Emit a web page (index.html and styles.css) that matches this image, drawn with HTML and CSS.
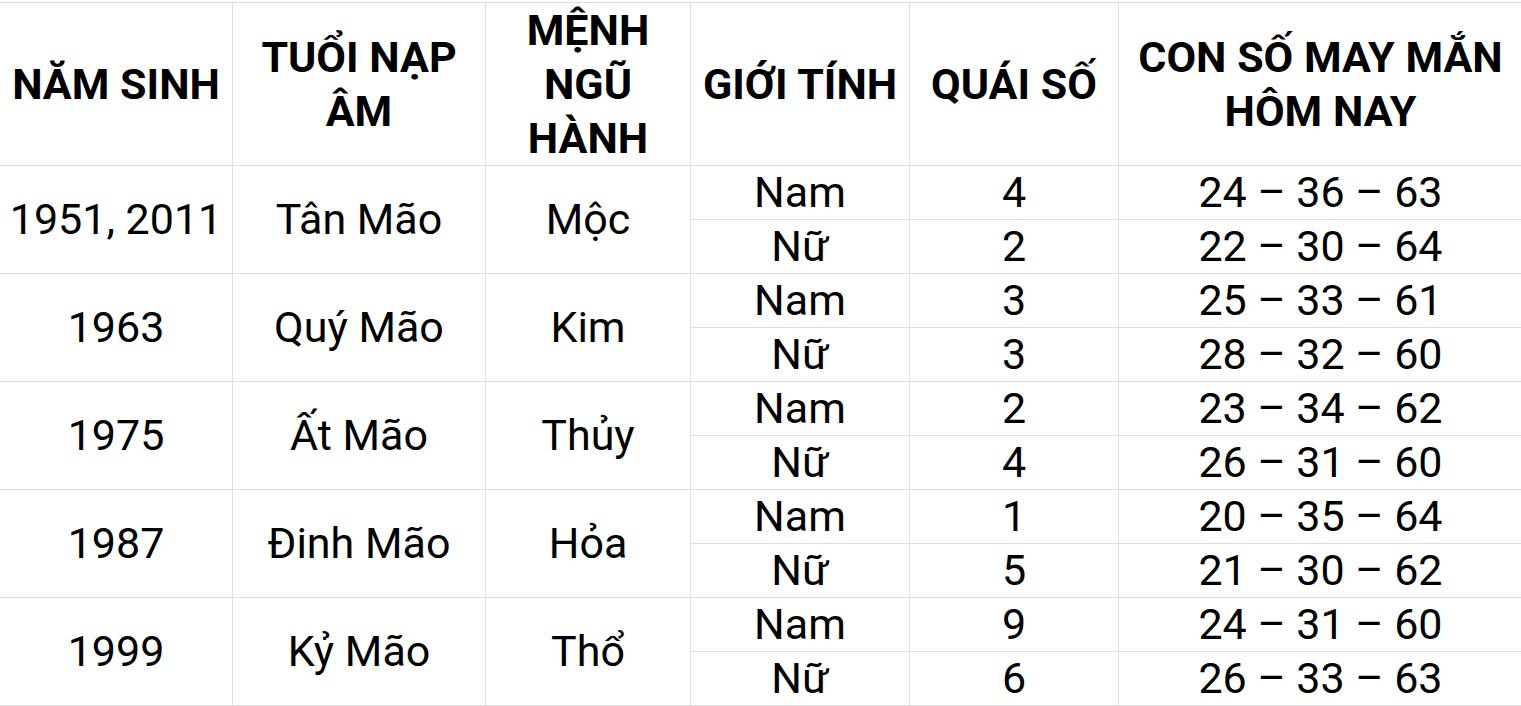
FILE: index.html
```html
<!DOCTYPE html>
<html lang="vi">
<head>
<meta charset="utf-8">
<link rel="stylesheet" href="styles.css">
</head>
<body>
<table class="lucky">
  <colgroup>
    <col class="c1"><col class="c2"><col class="c3"><col class="c4"><col class="c5"><col class="c6">
  </colgroup>
  <thead>
    <tr>
      <th>NĂM SINH</th>
      <th>TUỔI NẠP<br>ÂM</th>
      <th>MỆNH<br>NGŨ<br>HÀNH</th>
      <th>GIỚI TÍNH</th>
      <th>QUÁI SỐ</th>
      <th>CON SỐ MAY MẮN<br>HÔM NAY</th>
    </tr>
  </thead>
  <tbody>
    <tr><td rowspan="2">1951, 2011</td><td rowspan="2">Tân Mão</td><td rowspan="2">Mộc</td><td>Nam</td><td>4</td><td>24 – 36 – 63</td></tr>
    <tr><td>Nữ</td><td>2</td><td>22 – 30 – 64</td></tr>
    <tr><td rowspan="2">1963</td><td rowspan="2">Quý Mão</td><td rowspan="2">Kim</td><td>Nam</td><td>3</td><td>25 – 33 – 61</td></tr>
    <tr><td>Nữ</td><td>3</td><td>28 – 32 – 60</td></tr>
    <tr><td rowspan="2">1975</td><td rowspan="2">Ất Mão</td><td rowspan="2">Thủy</td><td>Nam</td><td>2</td><td>23 – 34 – 62</td></tr>
    <tr><td>Nữ</td><td>4</td><td>26 – 31 – 60</td></tr>
    <tr><td rowspan="2">1987</td><td rowspan="2">Đinh Mão</td><td rowspan="2">Hỏa</td><td>Nam</td><td>1</td><td>20 – 35 – 64</td></tr>
    <tr><td>Nữ</td><td>5</td><td>21 – 30 – 62</td></tr>
    <tr><td rowspan="2">1999</td><td rowspan="2">Kỷ Mão</td><td rowspan="2">Thổ</td><td>Nam</td><td>9</td><td>24 – 31 – 60</td></tr>
    <tr><td>Nữ</td><td>6</td><td>26 – 33 – 63</td></tr>
  </tbody>
</table>
</body>
</html>
```
FILE: styles.css
```css
html, body {
  margin: 0;
  padding: 0;
  background: #ffffff;
}
body {
  padding-top: 2px;
  overflow: hidden;
}
.lucky {
  border-collapse: collapse;
  table-layout: fixed;
  width: 1523px;
  margin-left: -1px;
  font-family: Roboto, "Liberation Sans", sans-serif;
  font-size: 43px;
  color: #000;
}
.c1 { width: 233px; }
.c2 { width: 253px; }
.c3 { width: 205px; }
.c4 { width: 219px; }
.c5 { width: 209px; }
.c6 { width: 404px; }
.lucky th, .lucky td {
  border: 1px solid #dedede;
  padding: 0;
  text-align: center;
  vertical-align: middle;
}
.lucky th {
  font-weight: 700;
  height: 162px;
  line-height: 54px;
}
.lucky td {
  font-weight: 400;
  height: 53px;
  line-height: 53px;
}
```
